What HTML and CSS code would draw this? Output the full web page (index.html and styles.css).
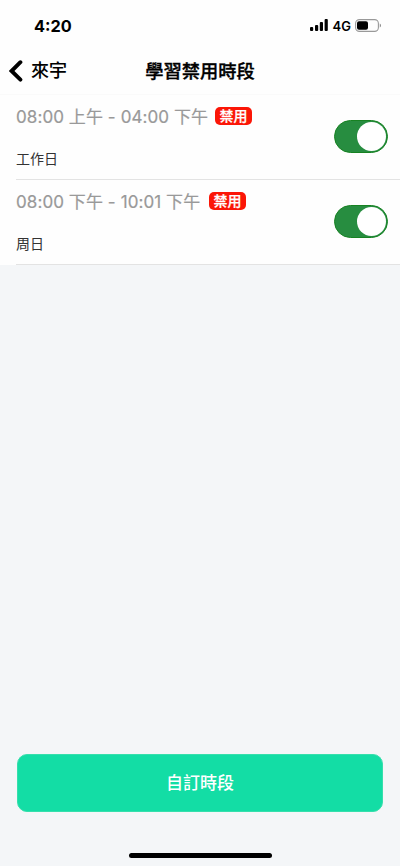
FILE: index.html
```html
<!DOCTYPE html>
<html lang="zh-Hant">
<head>
<meta charset="utf-8">
<title>學習禁用時段</title>
<link rel="stylesheet" href="styles.css">
</head>
<body>
<div class="screen">
  <div class="status">
    <span class="clock">4:20</span>
    <div class="indicators">
      <svg class="signal" width="18" height="12" viewBox="0 0 18 12"><rect x="0" y="8" width="3.2" height="4" rx="1"/><rect x="5" y="6" width="3.2" height="6" rx="1"/><rect x="9.8" y="3" width="3.2" height="9" rx="1"/><rect x="14.6" y="0" width="3.2" height="12" rx="1"/></svg>
      <span class="network">4G</span>
      <svg class="battery" width="27" height="13" viewBox="0 0 27 13"><rect x=".6" y=".6" width="22.8" height="11.8" rx="3.8" fill="none" stroke="#999" stroke-width="1.1"/><rect x="2" y="2.3" width="11" height="8.4" rx="2"/><path d="M24.8 4.5c1.4.5 1.4 3.5 0 4z" fill="#777"/></svg>
    </div>
  </div>
  <header class="nav">
    <div class="back">
      <svg width="14" height="22" viewBox="0 0 14 22"><path d="M11.4 2.2 2.6 11l8.8 8.6" fill="none" stroke="#000" stroke-width="3.9" stroke-linecap="round" stroke-linejoin="miter"/></svg>
      <span>來宇</span>
    </div>
    <h1 class="title">學習禁用時段</h1>
  </header>
  <main class="list">
    <section class="row">
      <div class="info">
        <div class="period"><span class="time">08:00 上午 - 04:00 下午</span><span class="tag">禁用</span></div>
        <div class="days">工作日</div>
      </div>
      <div class="switch"><div class="knob"></div></div>
    </section>
    <section class="row">
      <div class="info">
        <div class="period"><span class="time">08:00 下午 - 10:01 下午</span><span class="tag">禁用</span></div>
        <div class="days">周日</div>
      </div>
      <div class="switch"><div class="knob"></div></div>
    </section>
  </main>
  <footer class="footer">
    <button class="action">自訂時段</button>
    <div class="home"></div>
  </footer>
</div>
</body>
</html>
```
FILE: styles.css
```css
* { box-sizing: border-box; }
body { margin: 0; font-family: Inter, "Noto Sans CJK TC", sans-serif; color: #000; }
.screen { width: 400px; height: 866px; display: flex; flex-direction: column; background: #f4f6f8; overflow: hidden; }
.status { height: 50px; background: #fefefe; display: flex; justify-content: space-between; padding: 0 18px 0 34px; }
.clock { font-size: 16.3px; font-weight: 700; line-height: 20px; padding-top: 16px; }
.indicators { display: flex; align-items: center; height: 20px; margin-top: 15px; }
.network { font-size: 13px; font-weight: 600; line-height: 20px; margin: 1px 4px 0 5px; }
.nav { height: 45px; background: #fefefe; border-bottom: 1px solid #fafafa; display: grid; grid-template-columns: 100px 200px 100px; }
.back { display: flex; align-items: center; height: 41px; padding-left: 9px; font-size: 18px; font-weight: 500; gap: 8px; }
.back span { line-height: 28px; }
.title { margin: 0; height: 42px; line-height: 42px; font-size: 18.3px; font-weight: 500; -webkit-text-stroke: .35px #000; text-align: center; }
.list { display: flex; flex-direction: column; }
.row { position: relative; height: 85px; background: #fefefe; display: flex; justify-content: space-between; padding: 8px 12px 0 16px; }
.row::after { content: ""; position: absolute; left: 16px; right: 0; bottom: 0; height: 1px; background: #e3e3e3; }
.period { display: flex; align-items: center; height: 26px; color: #999; }
.time { width: 192px; font-size: 17px; font-weight: 400; -webkit-text-stroke: .2px #999; line-height: 26px; padding-top: 1px; white-space: pre; letter-spacing: .08px; }
.row:nth-child(2) .time { width: 186px; }
.tag { width: 37px; height: 18px; margin-left: 7px; border-radius: 5px; background: #fb1607; color: #fff; font-size: 14px; font-weight: 500; -webkit-text-stroke: .25px #fff; line-height: 18px; text-align: center; }
.days { margin-top: 20px; font-size: 14px; line-height: 20px; font-weight: 400; color: #333; }
.switch { width: 54px; height: 33px; margin-top: 17px; border-radius: 17px; background: #278d40; border: 1px solid #178222; display: flex; justify-content: flex-end; padding: 1px; }
.knob { width: 29px; height: 29px; border-radius: 50%; background: #fff; }
.footer { margin-top: auto; height: 112px; padding: 0 17px; display: flex; flex-direction: column; align-items: center; }
.action { width: 366px; height: 58px; border: 1px solid #36dfac; border-radius: 10px; background: #13dda5; color: #fff; font: 500 17px/56px Inter, "Noto Sans CJK TC", sans-serif; padding: 0; }
.home { width: 143px; height: 5px; border-radius: 3px; background: #000; margin-top: 41px; }
```
